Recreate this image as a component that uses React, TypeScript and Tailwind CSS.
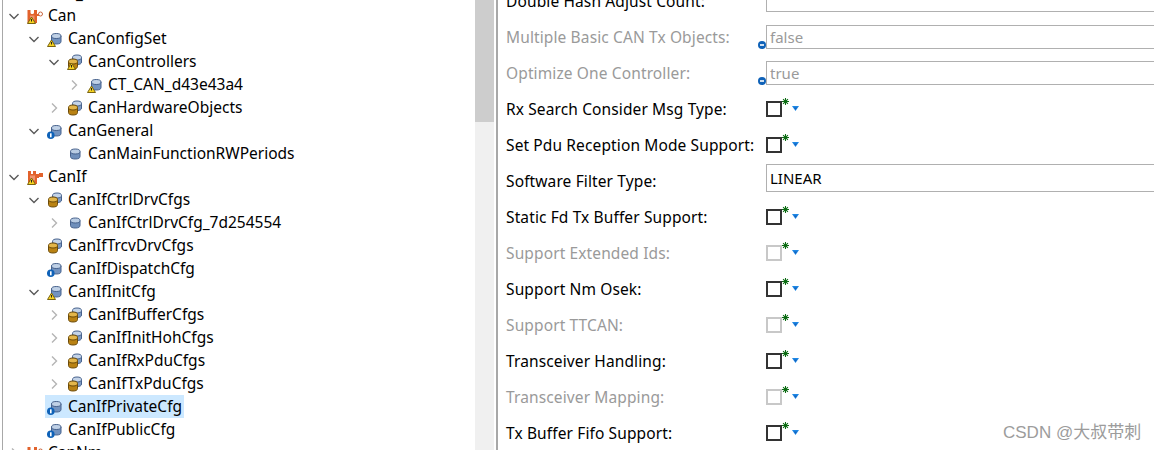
const FONT = "font-['Noto_Sans','Noto_Sans_CJK_SC',sans-serif]"

type IconKind = 'can' | 'canif' | 'single' | 'stack' | 'gold'
type Badge = 'warn' | 'info' | undefined

interface TreeRow {
  label: string
  level: number
  icon: IconKind
  badge?: Badge
  arrow?: 'open' | 'closed'
  selected?: boolean
}

const treeRows: TreeRow[] = [
  { label: 'Can_', level: 0, icon: 'single' },
  { label: 'Can', level: 0, icon: 'can', badge: 'warn', arrow: 'open' },
  { label: 'CanConfigSet', level: 1, icon: 'stack', badge: 'warn', arrow: 'open' },
  { label: 'CanControllers', level: 2, icon: 'gold', badge: 'warn', arrow: 'open' },
  { label: 'CT_CAN_d43e43a4', level: 3, icon: 'stack', badge: 'warn', arrow: 'closed' },
  { label: 'CanHardwareObjects', level: 2, icon: 'gold', arrow: 'closed' },
  { label: 'CanGeneral', level: 1, icon: 'stack', badge: 'info', arrow: 'open' },
  { label: 'CanMainFunctionRWPeriods', level: 2, icon: 'single' },
  { label: 'CanIf', level: 0, icon: 'canif', badge: 'warn', arrow: 'open' },
  { label: 'CanIfCtrlDrvCfgs', level: 1, icon: 'gold', arrow: 'open' },
  { label: 'CanIfCtrlDrvCfg_7d254554', level: 2, icon: 'single', arrow: 'closed' },
  { label: 'CanIfTrcvDrvCfgs', level: 1, icon: 'gold' },
  { label: 'CanIfDispatchCfg', level: 1, icon: 'stack', badge: 'info' },
  { label: 'CanIfInitCfg', level: 1, icon: 'stack', badge: 'warn', arrow: 'open' },
  { label: 'CanIfBufferCfgs', level: 2, icon: 'gold', arrow: 'closed' },
  { label: 'CanIfInitHohCfgs', level: 2, icon: 'gold', arrow: 'closed' },
  { label: 'CanIfRxPduCfgs', level: 2, icon: 'gold', arrow: 'closed' },
  { label: 'CanIfTxPduCfgs', level: 2, icon: 'gold', arrow: 'closed' },
  { label: 'CanIfPrivateCfg', level: 1, icon: 'stack', badge: 'info', selected: true },
  { label: 'CanIfPublicCfg', level: 1, icon: 'stack', badge: 'info' },
  { label: 'CanNm', level: 0, icon: 'can', arrow: 'closed' },
]

interface FormRow {
  label: string
  kind: 'text' | 'check'
  value?: string
  disabled?: boolean
}

const formRows: FormRow[] = [
  { label: 'Double Hash Adjust Count:', kind: 'text', value: '' },
  { label: 'Multiple Basic CAN Tx Objects:', kind: 'text', value: 'false', disabled: true },
  { label: 'Optimize One Controller:', kind: 'text', value: 'true', disabled: true },
  { label: 'Rx Search Consider Msg Type:', kind: 'check' },
  { label: 'Set Pdu Reception Mode Support:', kind: 'check' },
  { label: 'Software Filter Type:', kind: 'text', value: 'LINEAR' },
  { label: 'Static Fd Tx Buffer Support:', kind: 'check' },
  { label: 'Support Extended Ids:', kind: 'check', disabled: true },
  { label: 'Support Nm Osek:', kind: 'check' },
  { label: 'Support TTCAN:', kind: 'check', disabled: true },
  { label: 'Transceiver Handling:', kind: 'check' },
  { label: 'Transceiver Mapping:', kind: 'check', disabled: true },
  { label: 'Tx Buffer Fifo Support:', kind: 'check' },
]

function Cylinder({ x, y, w, h, body, top, line }: { x: number; y: number; w: number; h: number; body: string; top: string; line: string }) {
  const ry = 2.5
  return (
    <g>
      <path
        d={`M${x} ${y + ry}V${y + h - ry}A${w / 2} ${ry} 0 0 0 ${x + w} ${y + h - ry}V${y + ry}`}
        fill={body}
        stroke={line}
      />
      <ellipse cx={x + w / 2} cy={y + ry} rx={w / 2} ry={ry} fill={top} stroke={line} />
    </g>
  )
}

function NodeIcon({ kind, badge }: { kind: IconKind; badge?: Badge }) {
  return (
    <svg width="16" height="16" viewBox="0 0 16 16" className="shrink-0 overflow-visible">
      {kind === 'single' && <Cylinder x={3.5} y={3} w={9.5} h={10} body="#6f8fbb" top="#b9cce3" line="#46618c" />}
      {kind === 'stack' && <Cylinder x={4.5} y={2.5} w={9.5} h={10.5} body="#7393bf" top="#c0d1e6" line="#46618c" />}
      {kind === 'gold' && (
        <g>
          <Cylinder x={5.5} y={1} w={9} h={9.5} body="#7f9cc4" top="#c3d3e8" line="#46618c" />
          <Cylinder x={1.5} y={5} w={9} h={10} body="#b98213" top="#e3b64a" line="#6b4a08" />
        </g>
      )}
      {kind === 'can' && (
        <g>
          <path d="M0.5 2h3v2.5c0 1 .8 1.5 1.7 1.5S7 5.500 7 4.500V2h3v4h2v2h-2v7H0.500z" fill="#e2622c" />
          <path d="M3 7.500h4.500v5H3z" fill="#f0936a" />
          <circle cx="13.500" cy="6" r="2" fill="#fff" stroke="#c9673f" />
        </g>
      )}
      {kind === 'canif' && (
        <g>
          <path d="M1 2h3v3h2V2h3v3h3V4h4v4h-4V9h-2v6H1z" fill="#e2622c" />
          <path d="M3 6.500h5v5H3z" fill="#f0936a" />
        </g>
      )}
      {badge === 'warn' && (
        <g>
          <path d="M4.500 9 L8.500 15.500 H0.500 Z" fill="#f7d321" stroke="#7a6410" strokeLinejoin="round" />
          <path d="M4.500 11v2.500" stroke="#222" />
        </g>
      )}
      {badge === 'info' && (
        <g>
          <circle cx="3.800" cy="12.300" r="3.800" fill="#0f62b8" />
          <rect x="3" y="10.300" width="1.600" height="4" fill="#fff" />
        </g>
      )}
    </svg>
  )
}

function Arrow({ state }: { state?: 'open' | 'closed' }) {
  return (
    <svg width="16" height="16" viewBox="0 0 16 16" className="shrink-0">
      {state === 'open' && <path d="M3.500 6 L8 10.500 L12.500 6" fill="none" stroke="#5a5a5a" strokeWidth="1.400" />}
      {state === 'closed' && <path d="M6 3.500 L10.500 8 L6 12.500" fill="none" stroke="#b4b4b4" strokeWidth="1.400" />}
    </svg>
  )
}

function Tree() {
  return (
    <div className="-mt-[19px] flex flex-col">
      {treeRows.map((row, i) => (
        <div key={row.label} className="flex h-[23px] shrink-0 items-center" style={{ paddingLeft: 3 + row.level * 20 }}>
          <Arrow state={row.arrow} />
          <div className={`ml-[3px] flex h-[23px] items-center gap-[5px] pl-[2px] pr-[2px] ${row.selected ? 'bg-[#cce8ff]' : ''}`}>
            <NodeIcon kind={row.icon} badge={row.badge} />
            <span className={`whitespace-nowrap text-[15.5px] text-black ${i === 0 ? 'mt-[3px]' : ''}`}>{row.label}</span>
          </div>
        </div>
      ))}
    </div>
  )
}

function CheckField({ disabled }: { disabled?: boolean }) {
  return (
    <div className="flex items-start pt-[10px]">
      <div className={`h-4 w-4 border-2 bg-white ${disabled ? 'border-[#c8c8c8]' : 'border-[#333333]'}`} />
      <svg width="7" height="7" viewBox="0 0 8 8" className="-mt-[3px]">
        <path d="M4 0v8M0 4h8M1.200 1.200l5.600 5.600M6.800 1.200l-5.600 5.600" stroke="#0b6b12" strokeWidth="1.200" />
      </svg>
      <svg width="7" height="5" viewBox="0 0 7 5" className="ml-[3px] mt-[5px]">
        <path d="M0 0h7L3.500 5z" fill="#1e88e5" />
        <path d="M1.800 1.500h3.400L3.500 4z" fill="#1565c0" />
      </svg>
    </div>
  )
}

function TextField({ value, disabled }: { value?: string; disabled?: boolean }) {
  return (
    <div className={`relative min-w-0 flex-1 ${disabled ? 'pt-[6px]' : 'pt-px'}`}>
      <div
        className={`-mr-4 flex items-center border border-[#b0b0b0] pl-[3px] text-[15px] ${
          disabled ? 'h-[24px] text-[#9a9a9a]' : 'h-[28px] text-black'
        }`}
      >
        {value}
      </div>
      {disabled && (
        <svg width="8" height="8" viewBox="0 0 8 8" className="absolute -left-2 top-[22px]">
          <circle cx="4" cy="4" r="4" fill="#0f62b8" />
          <rect x="2" y="3.200" width="4" height="1.600" fill="#fff" />
        </svg>
      )}
    </div>
  )
}

function Form() {
  return (
    <div className="-mt-[17px] flex flex-col">
      {formRows.map((row) => (
        <div key={row.label} className="flex h-9 shrink-0 items-start">
          <div
            className={`flex h-9 w-[260px] shrink-0 items-center whitespace-nowrap pt-[2px] text-[15.5px] tracking-[0.12px] ${
              row.disabled ? 'text-[#9a9a9a]' : 'text-black'
            }`}
          >
            {row.label}
          </div>
          {row.kind === 'check' ? <CheckField disabled={row.disabled} /> : <TextField value={row.value} disabled={row.disabled} />}
        </div>
      ))}
    </div>
  )
}

export default function App() {
  return (
    <div className={`relative flex h-[450px] w-[1154px] overflow-hidden bg-white ${FONT}`}>
      <div className="ml-[2px] h-full w-[473px] shrink-0 overflow-hidden border-l border-[#a8a8a8]">
        <Tree />
      </div>
      <div className="flex h-full w-[19px] shrink-0 flex-col bg-[#f0f0f0]">
        <div className="h-[122px] bg-[#cdcdcd]" />
      </div>
      <div className="ml-[2px] h-full w-[2px] shrink-0 bg-[#a8a8a8]" />
      <div className="min-w-0 flex-1 overflow-hidden pl-[8px]">
        <Form />
      </div>
      <div className="absolute left-[1003px] top-[420px] font-['Liberation_Sans','Noto_Sans_CJK_SC',sans-serif] text-[17px] text-[#9c9c9c]">
        CSDN @大叔带刺
      </div>
    </div>
  )
}
